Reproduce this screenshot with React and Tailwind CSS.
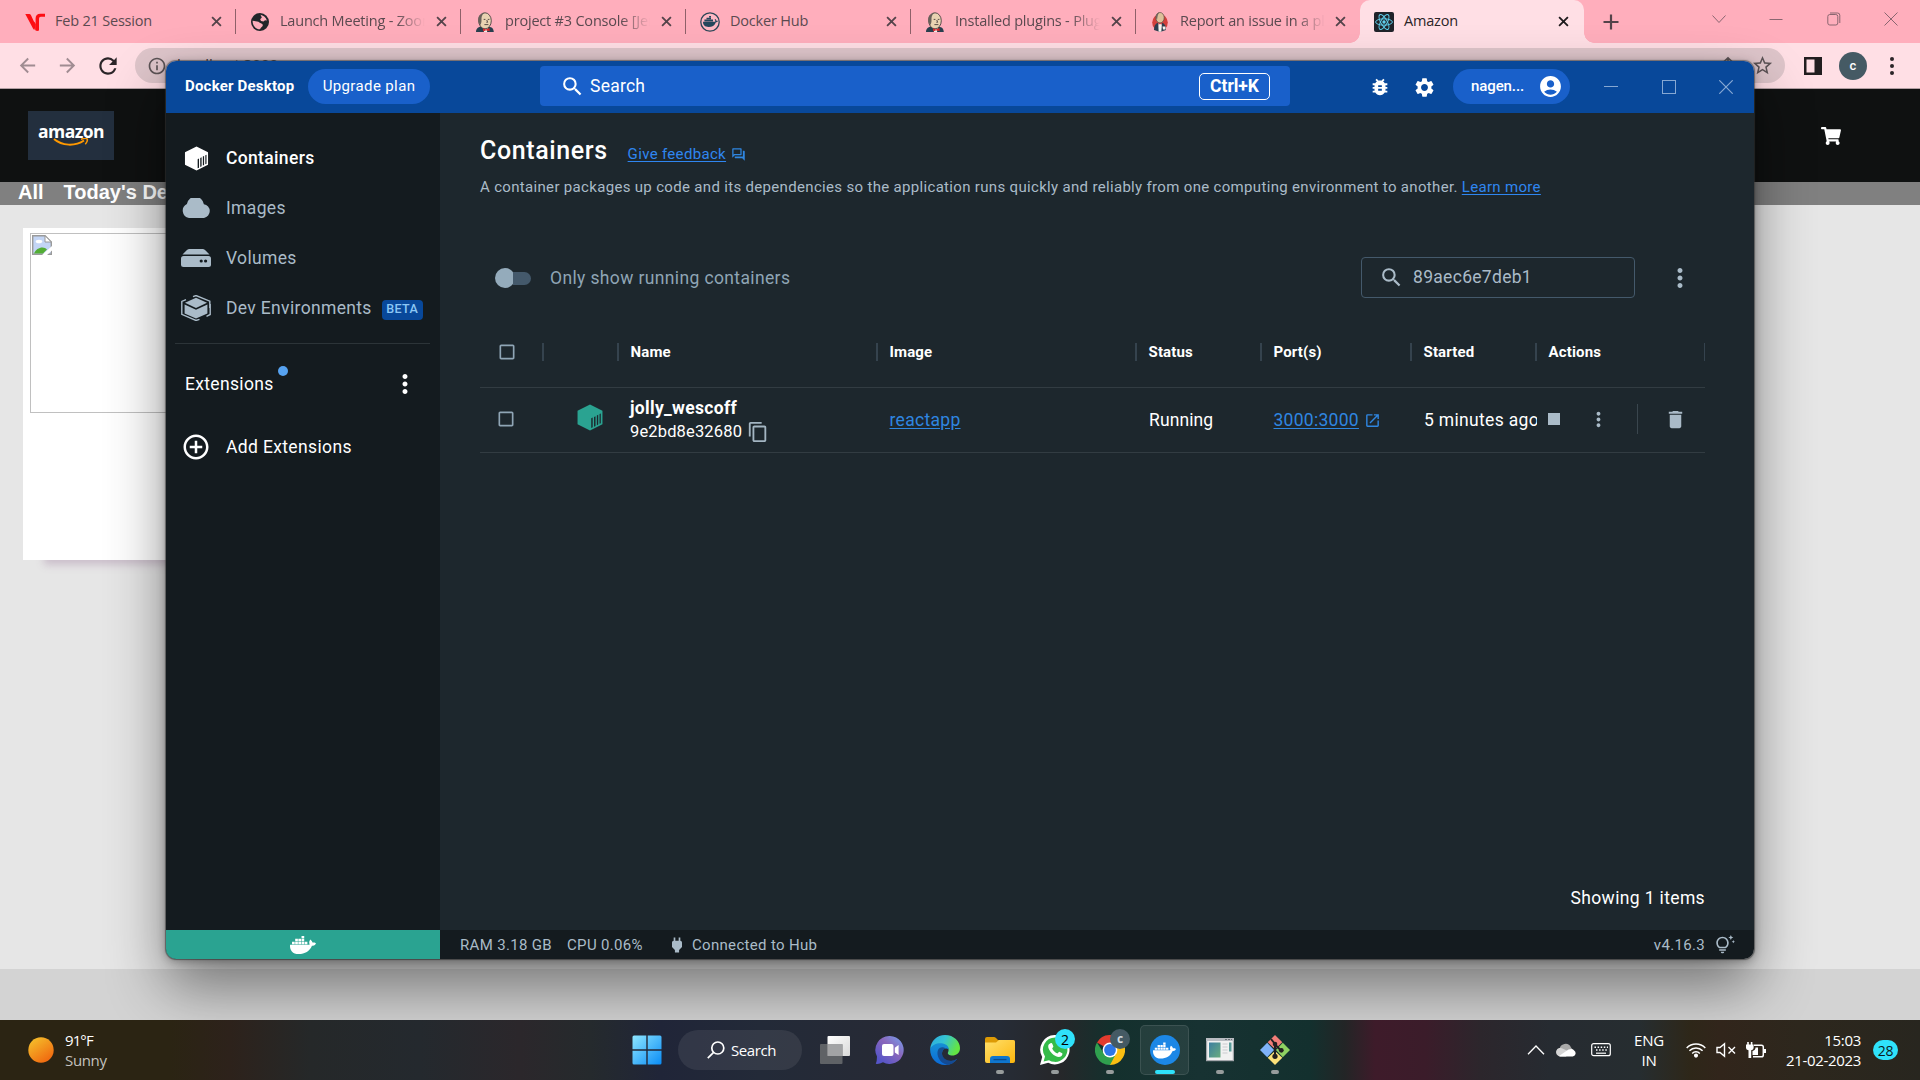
import React from "react";
import {
  MdSearch, MdBugReport, MdSettings, MdAccountCircle, MdMoreVert, MdContentCopy, MdOpenInNew, MdDelete,
  MdCheckBoxOutlineBlank, MdOutlineQuestionAnswer, MdAddCircleOutline, MdPower, MdOutlineTipsAndUpdates,
  MdStarBorder, MdInfoOutline, MdArrowBack, MdArrowForward, MdRefresh,
} from "react-icons/md";
import { FaDocker, FaShoppingCart } from "react-icons/fa";

const SEGOE = "font-['Open_Sans','Noto_Sans',sans-serif]";

/* ---------- Favicons ---------- */

function VIcon() {
  return (
    <svg viewBox="0 0 20 20" className="h-5 w-5">
      <path d="M.3 2 H4.2 Q5.4 2 6 3.2 L9.6 11 V17.8 Q8.6 17.6 8 16.4 Z" fill="#fd0d12" />
      <path d="M10.6 18.6 V6.6 Q10.6 1.8 15.4 1.8 H20 V4.8 H15.8 Q14 4.8 14 6.8 V18.6 Q12.2 19.2 10.6 18.6 Z" fill="#fd0d12" />
      <path d="M8.4 15 L10.8 18.6 L10.8 12 L9 9.6 Z" fill="#fd0d12" />
    </svg>
  );
}

function GlobeIcon() {
  return (
    <svg viewBox="0 0 20 20" className="h-5 w-5">
      <circle cx="10" cy="10" r="9" fill="#22262a" />
      <path d="M10.5 2.8 C13 3.3 16 5.2 16.9 8.5 L15 8.2 L13.5 9.6 L11 9 L10.2 7.2 L11.8 5.6 Z" fill="#ffaebc" />
      <path d="M2.6 8.8 C5 9.4 8.2 9 9.4 10.6 C10.2 11.6 12.6 11.3 12.8 13 C13 14.8 10.8 15 10 17.3 C6 17.3 2.4 13.6 2.6 8.8 Z" fill="#ffaebc" />
    </svg>
  );
}

function JenkinsIcon() {
  return (
    <svg viewBox="0 0 20 20" className="h-5 w-5">
      <path d="M1 20 C1 16 4 14.5 7 14.5 L15 15 C17.5 15.6 18.5 17 18.8 20 Z" fill="#29404f" />
      <path d="M8 15 L13 15 L12 20 L9 20 Z" fill="#f3efe8" />
      <ellipse cx="10" cy="8.8" rx="6.3" ry="8" fill="#e9d3b2" stroke="#4a4140" strokeWidth=".9" />
      <path d="M3.8 11 C2 5 4.6 1.2 9.6 .7 C6.8 2.8 6.3 5 6.5 8 C6.6 10 6 12.6 5.2 13 Z" fill="#69605a" />
      <path d="M8.7 7.4 H10.4 M12.8 7.4 H14.4 M11.8 8 L12.6 10.3 H11.4 M9.4 12.6 H13.4" stroke="#49403c" strokeWidth=".9" fill="none" />
      <path d="M8 16.3 L11 17.6 L14.4 16.1 L14.7 19.3 L11 18.3 L8.2 19.6 Z" fill="#d8252b" />
    </svg>
  );
}

function ButlerIcon() {
  return (
    <svg viewBox="0 0 20 20" className="h-5 w-5">
      <ellipse cx="10" cy="10.5" rx="7.8" ry="8.3" fill="#d4403c" />
      <path d="M4 18 C4 13 6 10.5 10 10.5 C14 10.5 16 13 16 18 L10 20 Z" fill="#2e3f50" />
      <path d="M8.3 11 H12 L11.3 19.8 H8.6 Z" fill="#f6f3ef" />
      <ellipse cx="10" cy="5.7" rx="4.2" ry="5.2" fill="#ddc09a" stroke="#5a4a44" strokeWidth=".7" />
      <path d="M6 6 C5.4 2.5 7.5 .7 9.4 .6 C7.6 2.2 7.5 5 7 8 Z" fill="#71655d" />
      <path d="M12.5 14.5 H15.5 V17.5 H13 Z" fill="#f6f3ef" />
      <path d="M8.4 10.6 L10 11.5 L11.8 10.6 V12.6 L10 11.9 L8.5 12.6 Z" fill="#c51d25" />
    </svg>
  );
}

function DockerHubIcon() {
  return (
    <svg viewBox="0 0 20 20" className="h-5 w-5">
      <circle cx="10" cy="10" r="9.2" fill="#ffb8c4" stroke="#2d4657" strokeWidth="1.3" />
      <path d="M3 9.8 H15.2 C15.4 8.9 15.2 8 14.6 7.6 L15.3 7 C16 7.4 16.3 8 16.4 8.7 C17 8.6 17.6 8.7 18 9 C17.6 9.9 16.8 10.2 15.9 10.2 C14.6 13.5 12.2 15 8.6 15 C4.8 15 3 13 3 9.8 Z" fill="#24475c" />
      <path d="M4.4 7.6 H13 V9.4 H4.4 Z M6.5 5.7 H11 V7.3 H6.5 Z M9.1 4 H11 V5.4 H9.1 Z" fill="#24475c" />
    </svg>
  );
}

function ReactIcon() {
  return (
    <svg viewBox="0 0 20 20" className="h-5 w-5">
      <rect width="20" height="20" rx="2" fill="#20232a" />
      <g fill="none" stroke="#5fcfec" strokeWidth=".95">
        <ellipse cx="10" cy="10" rx="8.4" ry="3.2" />
        <ellipse cx="10" cy="10" rx="8.4" ry="3.2" transform="rotate(60 10 10)" />
        <ellipse cx="10" cy="10" rx="8.4" ry="3.2" transform="rotate(120 10 10)" />
      </g>
      <circle cx="10" cy="10" r="1.7" fill="#5fcfec" />
    </svg>
  );
}

function CloseX({ className }) {
  return (
    <svg viewBox="0 0 12 12" className={className}>
      <path d="M1.2 1.2 L10.8 10.8 M10.8 1.2 L1.2 10.8" stroke="currentColor" strokeWidth="2" fill="none" />
    </svg>
  );
}

/* ---------- Browser ---------- */

const tabs = [
  { icon: VIcon, title: "Feb 21 Session" },
  { icon: GlobeIcon, title: "Launch Meeting - Zoom", fade: true },
  { icon: JenkinsIcon, title: "project #3 Console [Jenkins]", fade: true },
  { icon: DockerHubIcon, title: "Docker Hub" },
  { icon: JenkinsIcon, title: "Installed plugins - Plugin", fade: true },
  { icon: ButlerIcon, title: "Report an issue in a plugin", fade: true, last: true },
];

function Tab({ icon: Icon, title, fade, last }) {
  return (
    <div className="flex h-[43px] w-[225px] shrink-0 items-center pl-[14px]">
      <Icon />
      <span
        className={
          "-mt-[2px] ml-[10px] w-[146px] overflow-hidden whitespace-nowrap text-[14.5px] tracking-[-0.2px] text-[#5b4a50] " +
          (fade ? "[mask-image:linear-gradient(to_right,black_116px,transparent_145px)]" : "")
        }
      >
        {title}
      </span>
      <CloseX className={"h-[11px] w-[11px] text-[#54434a] " + (last ? "ml-[9px]" : "ml-[10px]")} />
      {!last && <div className="ml-[13px] h-[25px] w-px bg-[#8f6069]" />}
    </div>
  );
}

function TabStrip() {
  return (
    <div className="flex h-[43px] items-center bg-[#ffaebc] pl-[11px]">
      {tabs.map((t) => (
        <Tab key={t.title} {...t} />
      ))}
      <div className="relative -ml-px flex h-[43px] w-[224px] shrink-0 items-center rounded-t-[10px] bg-[#ffdfe5] pl-[14px]">
        <div className="absolute -left-[10px] bottom-0 h-[10px] w-[10px] bg-[radial-gradient(circle_at_0_0,#ffaebc_9.5px,#ffdfe5_10px)]" />
        <div className="absolute -right-[10px] bottom-0 h-[10px] w-[10px] bg-[radial-gradient(circle_at_100%_0,#ffaebc_9.5px,#ffdfe5_10px)]" />
        <ReactIcon />
        <span className="-mt-[2px] ml-[10px] w-[154px] text-[14.5px] tracking-[-0.2px] text-[#2b2528]">Amazon</span>
        <CloseX className="h-[11px] w-[11px] text-[#1f1b1d]" />
      </div>
      <svg viewBox="0 0 16 16" className="ml-[19px] h-4 w-4 shrink-0 text-[#54434a]">
        <path d="M8 .5 V15.5 M.5 8 H15.5" stroke="currentColor" strokeWidth="2.2" />
      </svg>
      <div className="mb-[5px] ml-auto mr-[22px] flex w-[186px] justify-between">
        <svg viewBox="0 0 14 14" className="h-[14px] w-[14px]" fill="none" stroke="#8a6670">
          <path d="M.5 3.5 L7 10.5 L13.5 3.5" />
        </svg>
        <svg viewBox="0 0 14 14" className="h-[14px] w-[14px]" fill="none" stroke="#8a6670">
          <path d="M.5 7.5 H13.5" />
        </svg>
        <svg viewBox="0 0 14 14" className="h-[14px] w-[14px]" fill="none" stroke="#8a6670">
          <rect x=".8" y="2.5" width="10" height="10.5" rx="2" />
          <path d="M3 1 H10.5 Q12.8 1 12.8 3.2 V11" />
        </svg>
        <svg viewBox="0 0 14 14" className="h-[14px] w-[14px]" fill="none" stroke="#8a6670">
          <path d="M.5 .5 L13.5 13.5 M13.5 .5 L.5 13.5" />
        </svg>
      </div>
    </div>
  );
}

function Toolbar() {
  return (
    <div className="flex h-[46px] items-center border-b border-[#b3a0a4] bg-[#ffdfe5] pl-[16px]">
      <MdArrowBack className="h-[23px] w-[23px] text-[#a08c92]" />
      <MdArrowForward className="ml-[17px] h-[23px] w-[23px] text-[#a08c92]" />
      <MdRefresh className="ml-[16px] h-[26px] w-[26px] text-[#2b2528]" />
      <div className="ml-[14px] flex h-[35px] w-[1650px] items-center rounded-full bg-[#dec5ca] pl-[12px]">
        <MdInfoOutline className="h-5 w-5 text-[#5c5356]" />
        <span className="-mt-[3px] ml-[10px] text-[15px] text-[#3a3436]">localhost:3000</span>
        <svg viewBox="0 0 20 20" className="ml-auto h-5 w-5" fill="none" stroke="#5c5356" strokeWidth="1.7">
          <path d="M10 2 V13 M5.5 6 L10 1.8 L14.5 6 M4 9 V18 H16 V9" />
        </svg>
        <MdStarBorder className="ml-[13px] mr-[11px] h-[23px] w-[23px] text-[#5c5356]" />
      </div>
      <svg viewBox="0 0 18 18" className="ml-[19px] h-[18px] w-[18px]">
        <path d="M0 0 H18 V18 H0 Z M2.5 2.5 V15.5 H10.5 V2.5 Z" fill="#221e20" fillRule="evenodd" />
      </svg>
      <div className="ml-[17px] flex h-7 w-7 items-center justify-center rounded-full bg-[#455a64] font-[Roboto,sans-serif] text-[13px] font-medium text-white">
        c
      </div>
      <svg viewBox="0 0 4 18" className="ml-[23px] h-[18px] w-1" fill="#2b2528">
        <circle cx="2" cy="2" r="2" /><circle cx="2" cy="9" r="2" /><circle cx="2" cy="16" r="2" />
      </svg>
    </div>
  );
}

function BrokenImage() {
  return (
    <svg viewBox="0 0 20 20" className="h-5 w-5">
      <path d="M.7 .7 H13 L19.3 7 V19.3 H.7 Z" fill="#c3d5f5" stroke="#9a9a9a" strokeWidth="1.4" />
      <path d="M13 .7 V7 H19.3 Z" fill="#fff" stroke="#9a9a9a" />
      <ellipse cx="7" cy="6.5" rx="3.3" ry="1.8" fill="#fff" />
      <path d="M2 18.6 C4 12.5 12 10.5 15 14.5 L11 18.6 Z" fill="#53ad35" />
      <path d="M20.5 10.5 L9.5 20.5 H14.5 L20.5 15 Z" fill="#fff" />
    </svg>
  );
}

function AmazonPage() {
  return (
    <div className="flex h-[931px] flex-col bg-[#e6e6e6]">
      <div className="flex h-[93px] shrink-0 items-center justify-between bg-[#0f1111] pl-7 pr-[79px]">
        <div className="flex h-[49px] w-[86px] flex-col items-center bg-[#232f3e]">
          <span className="mt-[9px] font-['Open_Sans',sans-serif] text-[17.5px] font-bold leading-[22px] tracking-[-0.5px] text-white">amazon</span>
          <svg viewBox="0 0 36 9" className="-mt-[4px] h-[9px] w-9">
            <path d="M1 1 C9 8 22 8.5 31 2.5" fill="none" stroke="#ff9900" strokeWidth="2" />
            <path d="M28 1.2 C31 .3 34 .3 34.3 1.2 C34.6 2.5 33.5 5 32.3 6.3" fill="none" stroke="#ff9900" strokeWidth="1.5" />
          </svg>
        </div>
        <FaShoppingCart className="mt-px h-[18px] w-[20px] text-white" />
      </div>
      <div className="flex h-[23px] shrink-0 items-center gap-5 bg-[#808080] pb-[2px] pl-[18px] font-['Liberation_Sans',Arial,sans-serif] text-[20px] font-bold leading-[21px] text-white">
        <span>All</span>
        <span>Today's Deals</span>
      </div>
      <div className="ml-[23px] mt-[23px] h-[332px] w-[300px] shrink-0 bg-white pl-[7px] pt-[5px] shadow-[18px_8px_8px_-3px_#cbbfcb]">
        <div className="h-[180px] w-[280px] border border-[#c0c0c0] p-px">
          <BrokenImage />
        </div>
      </div>
      <div className="mt-auto h-[51px] shrink-0 bg-[#d3d3d3]" />
    </div>
  );
}

/* ---------- Docker Desktop ---------- */

function ContainerCube({ className, bars }) {
  return (
    <svg viewBox="0 0 24 26" className={className}>
      <path d="M12 .5 L24 6.5 V19.5 L12 25.5 L0 19.5 V6.5 Z" fill="currentColor" />
      <path d="M13.2 13.8 L14.6 13.1 V22.5 L13.2 23.2 Z M15.9 12.4 L17.3 11.7 V21.1 L15.9 21.8 Z M18.6 11 L19.9 10.4 V19.8 L18.6 20.4 Z M21.2 9.7 L22.4 9.1 V18.5 L21.2 19.1 Z" fill={bars} />
    </svg>
  );
}

function CloudIcon() {
  return (
    <svg viewBox="0 0 30 20" className="h-5 w-[30px]">
      <path d="M8 20 A7.5 7.5 0 0 1 5.9 5.9 A8.6 8.6 0 0 1 22.9 6.2 A7 7 0 0 1 23 20 Z" fill="#aabbc8" />
    </svg>
  );
}

function VolumeIcon() {
  return (
    <svg viewBox="0 0 30 18" className="h-[18px] w-[30px]">
      <path d="M8.5 0 H21.5 Q23 0 24.3 1.3 L28.5 5.5 H1.5 L5.7 1.3 Q7 0 8.5 0 Z" fill="#aabbc8" />
      <path d="M0 9.5 Q0 7 2.5 7 H27.5 Q30 7 30 9.5 V15.5 Q30 18 27.5 18 H2.5 Q0 18 0 15.5 Z" fill="#aabbc8" />
      <circle cx="20.2" cy="12" r="1.6" fill="#141b1f" />
      <circle cx="24.6" cy="12" r="1.6" fill="#141b1f" />
    </svg>
  );
}

function DevEnvIcon() {
  return (
    <svg viewBox="0 0 30 26" className="h-[26px] w-[30px]">
      <path d="M15 2.8 L26 7.8 L15 13 L4 7.8 Z" fill="#aabbc8" />
      <path d="M3.6 9.6 L15 14.8 L26.4 9.6 V18.6 L15 23.4 L3.6 18.6 Z" fill="#aabbc8" />
      <path d="M12 1.7 L15 .5 L28.8 6.2 V13 M29.2 9 V19.5 L25.5 21.3 M18.5 24.3 L15 25.5 L.8 19.4 V13.5 M.8 16 V6.4 L5 4.6" fill="none" stroke="#aabbc8" strokeWidth="1.4" />
    </svg>
  );
}

function NavItem({ icon, label, active, badge }) {
  return (
    <div className="flex h-[50px] items-center pl-[15px]">
      <div className="flex w-[30px] justify-center">{icon}</div>
      <span className={"ml-[15px] whitespace-nowrap text-[17.5px] tracking-[0.34px] " + (active ? "font-medium text-white" : "text-[#aabbc8]")}>{label}</span>
      {badge && (
        <span className="ml-[10px] mt-[3px] flex h-5 w-[41px] items-center justify-center rounded bg-[#08489a] text-[12.5px] font-medium tracking-[0.4px] text-[#8bc7f5]">
          {badge}
        </span>
      )}
    </div>
  );
}

function TitleBar() {
  return (
    <div className="flex h-[52px] shrink-0 items-center bg-[#08489a] pb-[2px] pl-[19px]">
      <span className="w-[123px] whitespace-nowrap text-[15px] font-bold tracking-[0.2px] text-white">Docker Desktop</span>
      <div className="mt-px flex h-[35px] w-[122px] items-center justify-center rounded-full bg-[#1960ca] pb-px text-[15px] tracking-[0.38px] text-white">
        Upgrade plan
      </div>
      <div className="ml-[110px] flex h-10 w-[750px] items-center rounded bg-[#1960ca] pl-[20px] pr-5">
        <MdSearch className="h-[25px] w-[25px] text-white" />
        <span className="ml-[5px] text-[17.5px] tracking-[0.25px] text-white">Search</span>
        <div className="ml-auto flex h-[27px] w-[71px] items-center justify-center rounded-[5px] border border-white text-[17.5px] font-bold tracking-[-0.05px] text-white">
          Ctrl+K
        </div>
      </div>
      <MdBugReport className="ml-[79px] mt-[2px] h-[22px] w-[22px] text-white" />
      <MdSettings className="ml-[22px] mt-[2px] h-[23px] w-[23px] text-white" />
      <div className="ml-[17px] mt-px flex h-[35px] w-[117px] items-center justify-between rounded-full bg-[#1960ca] pl-[18px] pr-[7px] text-[15px] font-medium text-white">
        <span className="tracking-[-0.1px]">nagen...</span>
        <MdAccountCircle className="h-[25px] w-[25px]" />
      </div>
      <svg viewBox="0 0 14 14" className="ml-[34px] mt-px h-[14px] w-[14px]" fill="none" stroke="#86a8d3">
        <path d="M0 6.5 H14" />
      </svg>
      <svg viewBox="0 0 14 14" className="ml-[44px] mt-px h-[14px] w-[14px]" fill="none" stroke="#86a8d3">
        <rect x=".5" y=".5" width="13" height="13" />
      </svg>
      <svg viewBox="0 0 14 14" className="ml-[43px] mt-px h-[14px] w-[14px]" fill="none" stroke="#86a8d3" strokeWidth="1.2">
        <path d="M.3 .3 L13.7 13.7 M13.7 .3 L.3 13.7" />
      </svg>
    </div>
  );
}

function Sidebar() {
  return (
    <div className="flex w-[274px] shrink-0 flex-col bg-[#141b1f]">
      <div className="pt-[20px]">
        <NavItem active icon={<ContainerCube className="h-[25px] w-[27px] text-white" bars="#141b1f" />} label="Containers" />
        <NavItem icon={<CloudIcon />} label="Images" />
        <NavItem icon={<VolumeIcon />} label="Volumes" />
        <NavItem icon={<DevEnvIcon />} label="Dev Environments" badge="BETA" />
      </div>
      <div className="ml-[9px] mt-[10px] h-px w-[255px] bg-[#2c3438]" />
      <div className="mt-[20px] flex h-10 items-center pl-[19px]">
        <div className="relative text-[17.5px] tracking-[0.34px] text-white">
          Extensions
          <span className="absolute -right-[14px] -top-[5px] h-[10px] w-[10px] rounded-full bg-[#56a2f0]" />
        </div>
        <MdMoreVert className="ml-auto mr-[20px] h-[30px] w-[30px] text-white" />
      </div>
      <div className="mt-[18px] flex h-[50px] items-center pl-[15px] text-[17.5px] tracking-[0.36px] text-white">
        <MdAddCircleOutline className="h-[30px] w-[30px]" />
        <span className="ml-[15px]">Add Extensions</span>
      </div>
    </div>
  );
}

const GRID = "grid grid-cols-[64px_75px_259px_259px_125px_150px_125px_168px]";

function HeadCell({ children, thin }) {
  return (
    <div className="flex items-center justify-between pl-[11.5px]">
      <span>{children}</span>
      <div className={"h-[18px] bg-[#35434e] " + (thin ? "w-px" : "w-[2px]")} />
    </div>
  );
}

function ContainersTable() {
  return (
    <div className="w-[1225px]">
      <div className={GRID + " h-[73px] border-b border-[#323c42] pt-[2px] text-[15px] font-bold tracking-[0.15px] text-white"}>
        <HeadCell><MdCheckBoxOutlineBlank className="ml-[5px] h-[20px] w-[20px] text-[#8fa5b5]" /></HeadCell>
        <HeadCell />
        <HeadCell>Name</HeadCell>
        <HeadCell>Image</HeadCell>
        <HeadCell>Status</HeadCell>
        <HeadCell>Port(s)</HeadCell>
        <HeadCell>Started</HeadCell>
        <HeadCell thin>Actions</HeadCell>
      </div>
      <div className={GRID + " h-[65px] items-center border-b border-[#323c42] text-[17.5px] text-white"}>
        <MdCheckBoxOutlineBlank className="-mt-[2px] ml-4 h-[20px] w-[20px] text-[#8fa5b5]" />
        <ContainerCube className="-mt-[6px] ml-[31px] h-[27px] w-[30px] text-[#2aa391]" bars="#1d272d" />
        <div className="pl-[11px] leading-[23px]">
          <div className="font-bold tracking-[0.3px]">jolly_wescoff</div>
          <div className="flex items-center text-[16.5px] tracking-[0.15px]">
            9e2bd8e32680
            <MdContentCopy className="ml-[5px] h-[22px] w-[22px] text-[#a3b5c2]" />
          </div>
        </div>
        <span className="pl-[11.5px] tracking-[0.3px] text-[#2f86e0] underline underline-offset-2">reactapp</span>
        <span className="pl-[12px] tracking-[0.1px]">Running</span>
        <div className="flex items-center pl-[11.5px] tracking-[0.28px] text-[#2f86e0]">
          <span className="underline underline-offset-2">3000:3000</span>
          <MdOpenInNew className="ml-[5px] h-[17px] w-[17px]" />
        </div>
        <div className="overflow-hidden whitespace-nowrap pl-[12px] tracking-[0.32px]">5 minutes ago</div>
        <div className="-mt-[2px] flex items-center pl-[11px] text-[#aabbc8]">
          <div className="h-[12px] w-[12px] bg-[#aabbc8]" />
          <MdMoreVert className="ml-[27px] h-[23px] w-[23px]" />
          <div className="ml-[27px] h-[30px] w-px bg-[#3a464e]" />
          <MdDelete className="ml-[26px] h-[23px] w-[23px]" />
        </div>
      </div>
    </div>
  );
}

function MainPane() {
  return (
    <div className="flex flex-1 flex-col bg-[#1d272d] pl-[40px]">
      <div className="mt-[21px] flex h-[34px] items-center">
        <span className="text-[25px] font-medium tracking-[0.6px] text-white">Containers</span>
        <span className="ml-5 mt-[6px] whitespace-nowrap text-[15px] tracking-[0.33px] text-[#2f86f0] underline underline-offset-2">Give feedback</span>
        <MdOutlineQuestionAnswer className="ml-[5px] mt-[6px] h-[15px] w-[15px] text-[#2f86e0]" />
      </div>
      <div className="mt-[8px] h-[22px] whitespace-nowrap text-[15px] leading-[22px] tracking-[0.323px] text-[#aabbc8]">
        A container packages up code and its dependencies so the application runs quickly and reliably from one computing environment to another.{" "}
        <span className="text-[#2f86f0] underline underline-offset-2">Learn more</span>
      </div>
      <div className="mt-[59px] flex h-[42px] items-center">
        <div className="ml-[15px] flex h-5 w-9 items-center">
          <div className="h-5 w-5 shrink-0 rounded-full bg-[#94abbb]" />
          <div className="-ml-[2px] h-[13px] w-[18px] rounded-r-full bg-[#44596b]" />
        </div>
        <span className="ml-[19px] text-[17.5px] tracking-[0.37px] text-[#8fa5b5]">Only show running containers</span>
        <div className="-mt-px ml-auto flex h-[41px] w-[274px] items-center rounded border border-[#44596b] pl-[17px] text-[17.5px] text-[#aabbc8]">
          <MdSearch className="h-[25px] w-[25px]" />
          <span className="ml-[9px] tracking-[0.3px]">89aec6e7deb1</span>
        </div>
        <MdMoreVert className="ml-[30px] mr-[59px] h-[30px] w-[30px] text-[#aabbc8]" />
      </div>
      <div className="mt-[16px]">
        <ContainersTable />
      </div>
      <div className="mb-[20px] mr-[49px] mt-auto self-end text-[17.5px] leading-6 tracking-[0.36px] text-white">Showing 1 items</div>
    </div>
  );
}

function StatusBar() {
  return (
    <div className="flex h-[29px] shrink-0 items-center bg-[#141b1f] text-[15px] tracking-[0.33px] text-[#aabbc8]">
      <div className="flex h-full w-[274px] items-center justify-center bg-[#2aa391]">
        <FaDocker className="h-[26px] w-[26px] text-white" />
      </div>
      <span className="ml-5 mt-px">RAM 3.18 GB</span>
      <span className="ml-[15px] mt-px">CPU 0.06%</span>
      <MdPower className="ml-[24px] h-[20px] w-[20px]" />
      <span className="ml-[5px] mt-px">Connected to Hub</span>
      <span className="ml-auto mt-px">v4.16.3</span>
      <MdOutlineTipsAndUpdates className="ml-[10px] mr-[19px] h-[20px] w-[20px]" />
    </div>
  );
}

function DockerWindow() {
  return (
    <div className="absolute left-[166px] top-[61px] flex h-[898px] w-[1588px] flex-col overflow-hidden rounded-[10px] font-[Roboto,sans-serif] shadow-[0_28px_58px_rgba(0,0,0,0.45),0_2px_10px_rgba(0,0,0,0.3),0_0_1px_1px_rgba(80,80,80,0.6)]">
      <TitleBar />
      <div className="flex flex-1">
        <Sidebar />
        <MainPane />
      </div>
      <StatusBar />
    </div>
  );
}

/* ---------- Taskbar ---------- */

function WindowsLogo() {
  return (
    <svg viewBox="0 0 30 30" className="h-[30px] w-[30px]">
      <defs>
        <linearGradient id="win" x1="0" y1="0" x2="1" y2="1">
          <stop offset="0" stopColor="#8ee6ff" /><stop offset="1" stopColor="#0a8cf5" />
        </linearGradient>
      </defs>
      <path d="M2 .5 H14.3 V14.3 H.5 V2 Q.5 .5 2 .5 Z M15.7 .5 H28 Q29.5 .5 29.5 2 V14.3 H15.7 Z M.5 15.7 H14.3 V29.5 H2 Q.5 29.5 .5 28 Z M15.7 15.7 H29.5 V28 Q29.5 29.5 28 29.5 H15.7 Z" fill="url(#win)" />
    </svg>
  );
}

function TaskViewIcon() {
  return (
    <svg viewBox="0 0 30 30" className="h-[30px] w-[30px]">
      <defs>
        <linearGradient id="tv" x1="0" y1="0" x2="1" y2="1"><stop offset="0" stopColor="#fff" /><stop offset="1" stopColor="#d9d9d9" /></linearGradient>
      </defs>
      <rect x="7.5" y="1" width="22.5" height="20" rx="1" fill="url(#tv)" />
      <rect x="0" y="9" width="22.5" height="20" rx="1" fill="#6a6c6e" fillOpacity=".85" />
      <path d="M7.5 9 H22.5 V21 H7.5 Z" fill="#a2a3a5" />
    </svg>
  );
}

function ChatIcon() {
  return (
    <svg viewBox="0 0 30 30" className="h-[30px] w-[30px]">
      <defs>
        <linearGradient id="chat" x1="1" y1="0" x2=".2" y2=".9"><stop offset="0" stopColor="#74a4f2" /><stop offset=".5" stopColor="#8a66bb" /><stop offset="1" stopColor="#5655c8" /></linearGradient>
      </defs>
      <path d="M15 1 A14 14 0 1 1 8 27.3 Q4 29.3 .8 28.8 Q2 26 2 21.5 A14 14 0 0 1 15 1 Z" fill="url(#chat)" />
      <rect x="7" y="9" width="11.5" height="12" rx="2" fill="#fff" />
      <path d="M19.8 12.8 L23.6 10 V20 L19.8 17.4 Z" fill="#fff" />
    </svg>
  );
}

function EdgeIcon() {
  return (
    <svg viewBox="0 0 30 30" className="h-[30px] w-[30px]">
      <defs>
        <linearGradient id="e1" x1="0" y1="0" x2="1" y2=".35"><stop offset="0" stopColor="#2aa9e0" /><stop offset=".5" stopColor="#35c3d3" /><stop offset="1" stopColor="#63e544" /></linearGradient>
        <linearGradient id="e2" x1="0" y1="0" x2="0" y2="1"><stop offset="0" stopColor="#1690d4" /><stop offset="1" stopColor="#0b6ad6" /></linearGradient>
      </defs>
      <path d="M15 0 C24 0 30 6.5 30 13 C30 18.5 26 20.5 22.5 20.5 C19 20.5 17.2 19 18 17.5 C20 14 17 9.5 11.5 9.3 C6.5 9.2 2.5 11.5 .2 14 C.8 6 7 0 15 0 Z" fill="url(#e1)" />
      <path d="M.1 14 C2 9.6 7 7.8 11.5 8.2 C16 8.6 19 11.2 18.6 14.5 C16.5 12.5 12.5 13.5 12 18 C11.6 22.5 16 27 22.5 25.8 C24.5 25.4 26 24.6 27.3 23.8 C24.5 28 20 30.2 15 30 C6.5 30 0 23 .1 14 Z" fill="url(#e2)" />
      <path d="M8 15 C6 20 9.5 28 17 29.8 C21.5 29.5 25.2 27.2 27.3 23.8 C21 28 12.5 25 12 18 C12.2 15.5 14 13.6 15.7 13.4 C13 11.5 9.5 12 8 15 Z" fill="#173f7c" fillOpacity=".75" />
    </svg>
  );
}

function ExplorerIcon() {
  return (
    <svg viewBox="0 0 30 30" className="h-[30px] w-[30px]">
      <defs>
        <linearGradient id="fold" x1="0" y1="0" x2="1" y2="1"><stop offset="0" stopColor="#ffe06c" /><stop offset="1" stopColor="#fcb60d" /></linearGradient>
      </defs>
      <path d="M0 4 Q0 2 2 2 H9 Q10 2 11 3 L13 5 H28 Q30 5 30 7 V12 H0 Z" fill="#dd9a05" />
      <path d="M0 7.5 H11 L14 5 H28 Q30 5 30 7 V26 Q30 28 28 28 H2 Q0 28 0 26 Z" fill="url(#fold)" />
      <path d="M5 28 V24 Q5 21 8 21 H22 Q25 21 25 24 V28 Z" fill="#0f76ce" />
      <path d="M8.5 24.6 H21.5" stroke="#0a4b8c" strokeWidth="1.3" />
    </svg>
  );
}

function WhatsAppIcon() {
  return (
    <svg viewBox="0 0 30 30" className="h-[30px] w-[30px]">
      <path d="M15.3 0 A14.7 14.7 0 1 1 8.2 27.8 L0 30 L2.2 22 A14.7 14.7 0 0 1 15.3 0 Z" fill="#fff" />
      <path d="M15.3 2.5 A12.2 12.2 0 1 1 9 25.2 L3.6 26.5 L5 21.4 A12.2 12.2 0 0 1 15.3 2.5 Z" fill="#34bb48" />
      <path d="M10.5 8.2 C11.5 7.8 12 8 12.4 9 L13.3 11.2 C13.6 12 12.3 13 12.2 13.5 C13.3 16 15.2 17.6 17.5 18.4 C18 18.3 18.8 16.8 19.4 16.8 L22.2 18.2 C22.8 18.6 22.3 20.8 20.8 21.5 C18.5 22.6 14.8 21.2 12 18.4 C9.5 16 8 13 8.2 11 C8.4 9.7 9.3 8.6 10.5 8.2 Z" fill="#fff" />
    </svg>
  );
}

function ChromeIcon() {
  return (
    <svg viewBox="0 0 30 30" className="h-[30px] w-[30px]">
      <path d="M15 15 L2 7.5 A15 15 0 0 1 28 7.5 Z" fill="#e23b2e" />
      <path d="M15 15 L28 7.5 A15 15 0 0 1 15 30 Z" fill="#fbbf12" />
      <path d="M15 15 L21 18.8 L15 30 A15 15 0 0 1 2 7.5 L9 18.8 Z" fill="#2fa04e" />
      <circle cx="15" cy="15" r="7.4" fill="#fff" />
      <circle cx="15" cy="15" r="5.9" fill="#2d76e8" />
    </svg>
  );
}

function DockerTaskIcon() {
  return (
    <div className="flex h-[30px] w-[30px] items-center justify-center rounded-full bg-[#1c87e6]">
      <FaDocker className="h-[23px] w-[23px] text-white" />
    </div>
  );
}

function AppWindowIcon() {
  return (
    <svg viewBox="0 0 30 30" className="h-[30px] w-[30px]">
      <defs>
        <linearGradient id="app" x1="0" y1="0" x2="1" y2="1"><stop offset="0" stopColor="#3d7fa0" /><stop offset="1" stopColor="#69ab7e" /></linearGradient>
      </defs>
      <rect x="1.6" y="3.6" width="26.8" height="22" fill="#f1f1f1" stroke="#a5a8ad" strokeWidth="1.2" />
      <path d="M1 3 H29 V6 H1 Z" fill="#b9bcc2" />
      <path d="M20 4.5 H27" stroke="#6d7278" strokeDasharray="2 1" />
      <rect x="4" y="7.5" width="11.5" height="15" fill="url(#app)" />
      <path d="M17.5 9 H22.5 M17.5 12 H22.5 M17.5 15 H22.5 M17.5 18 H22.5" stroke="#c9cbd0" strokeWidth="1.2" />
      <rect x="24" y="7.5" width="2.5" height="9" fill="#5a9c9a" />
    </svg>
  );
}

function GitIcon() {
  return (
    <svg viewBox="0 0 30 30" className="h-[30px] w-[30px]">
      <path d="M15 0 L22.3 7.3 L15 14 L7.7 7.3 Z" fill="#f27d78" />
      <path d="M7.2 7.8 L14 15 L7.2 22.2 L0 15 Z" fill="#7fb2f8" />
      <path d="M22.8 7.8 L30 15 L22.8 22.2 L16 15 Z" fill="#8fd162" />
      <path d="M15 16 L22.3 22.7 L15 30 L7.7 22.7 Z" fill="#fce079" />
      <path d="M11 4 L15 9 V21 M15 9.5 L21 15.5" fill="none" stroke="#231f20" strokeWidth="2" />
      <circle cx="15" cy="9" r="2.3" fill="#231f20" /><circle cx="15" cy="21.3" r="2.6" fill="#231f20" /><circle cx="21.3" cy="15.3" r="2.4" fill="#231f20" />
    </svg>
  );
}

function TaskApp({ children, running, active, badge }) {
  return (
    <div className={"relative mx-[3px] flex h-[50px] w-[49px] items-center justify-center rounded-[5px] " + (active ? "border border-white/10 bg-white/[0.07]" : "")}>
      {children}
      {badge}
      {running && <div className="absolute bottom-[1px] h-1 w-2 rounded-full bg-[#979c9c]" />}
      {active && <div className="absolute bottom-[0px] h-1 w-5 rounded-full bg-[#2fe2fb]" />}
    </div>
  );
}

function Tray() {
  return (
    <div className="ml-auto flex items-center pr-[22px] text-white">
      <svg viewBox="0 0 18 10" className="h-[10px] w-[18px]" fill="none" stroke="#fff" strokeWidth="1.3"><path d="M1 9.3 L9 1 L17 9.3" /></svg>
      <svg viewBox="0 0 20 14" className="ml-[11px] h-[14px] w-5">
        <path d="M3.5 6.5 A6 6 0 0 1 15 4.5 L17 7 L8 11 Z" fill="#a9a9a9" />
        <path d="M4.5 13.5 A4.3 4.3 0 1 1 7 5.8 L14 9 L10 13.5 Z" fill="#d5d5d5" />
        <path d="M3 13 L12.5 6.6 Q16.8 4.8 18.4 7.8 A3.3 3.3 0 0 1 16.7 13.6 H5 Q3.8 13.6 3 13 Z" fill="#fff" />
      </svg>
      <svg viewBox="0 0 20 14" className="ml-[15px] h-[14px] w-5">
        <rect x=".7" y=".7" width="18.6" height="12" rx="2" fill="none" stroke="#fff" strokeWidth="1.2" />
        <path d="M3.5 4.2 H17 M5 7 H16" stroke="#fff" strokeWidth="1.5" strokeDasharray="1.5 1.6" />
        <path d="M5 10.2 H15" stroke="#fff" strokeWidth="1.2" />
      </svg>
      <div className="ml-[22px] w-[32px] text-center text-[15px] leading-5 tracking-[-0.2px]">
        <div>ENG</div>
        <div>IN</div>
      </div>
      <svg viewBox="0 0 20 16" className="ml-[21px] h-4 w-5" fill="none" stroke="#fff" strokeWidth="1.5">
        <path d="M.7 6 A13 13 0 0 1 19.3 6 M3.4 8.8 A9.2 9.2 0 0 1 16.6 8.8 M6.2 11.4 A5.3 5.3 0 0 1 13.8 11.4" />
        <circle cx="10" cy="13.6" r="1.3" fill="#fff" />
      </svg>
      <svg viewBox="0 0 20 16" className="ml-[10px] h-4 w-5" fill="none" stroke="#fff" strokeWidth="1.4">
        <path d="M1 5.5 H4 L8.5 1.8 V14.2 L4 10.5 H1 Z" />
        <path d="M12.5 5 L19 11.5 M19 5 L12.5 11.5" />
      </svg>
      <svg viewBox="0 0 20 17" className="ml-[10px] h-[17px] w-5">
        <path d="M8 3.2 H15.5 Q17.3 3.2 17.3 5 V13 Q17.3 14.8 15.5 14.8 H7" fill="none" stroke="#fff" strokeWidth="1.5" />
        <path d="M18 7 H20 V11 H18 Z M9.5 5.4 H12 V13 H6.5 V9 Q9.5 8 9.5 5.4 Z M0 2.5 H7.6 V6 Q7.6 8 5.2 8.3 V16 H2.5 V8.3 Q0 8 0 6 Z M1.2 0 H2.8 V3 H1.2 Z M4.8 0 H6.4 V3 H4.8 Z" fill="#fff" />
      </svg>
      <div className="-mt-px ml-[14px] w-[81px] whitespace-nowrap text-right text-[15px] leading-5 tracking-[-0.32px]">
        <div>15:03</div>
        <div>21-02-2023</div>
      </div>
      <div className="ml-[12px] flex h-5 w-[25px] items-center justify-center rounded-full bg-[#2fe2fb] text-[14px] tracking-[-0.3px] text-[#0c1a20]">28</div>
    </div>
  );
}

function Taskbar() {
  return (
    <div className="relative flex h-[60px] items-center bg-[linear-gradient(to_right,#2b2413_0,#2b2413_170px,#2d221b_230px,#252829_310px,#24292e_420px,#2b272b_520px,#252a2d_590px,#202538_660px,#232a38_760px,#272a35_900px,#262c36_1000px,#26272a_1060px,#14302d_1110px,#173232_1200px,#13302e_1310px,#232526_1345px,#3e1b2a_1375px,#3b1c2a_1425px,#2c262c_1480px,#262b31_1550px,#262d30_1640px,#2e2719_1690px,#31251b_1720px,#2d271d_1800px,#28261f_1920px)]">
      <svg viewBox="0 0 26 26" className="ml-7 h-[26px] w-[26px]">
        <defs><linearGradient id="sun" x1=".1" y1="0" x2=".8" y2="1"><stop offset="0" stopColor="#f5c32c" /><stop offset="1" stopColor="#f0640e" /></linearGradient></defs>
        <circle cx="13" cy="13" r="12.7" fill="url(#sun)" />
      </svg>
      <div className="ml-[11px] w-[100px] text-[15px] leading-5 tracking-[-0.35px]">
        <div className="tracking-[-0.9px] text-white">91°F</div>
        <div className="text-[#c4c2bf]">Sunny</div>
      </div>
      <div className="ml-[467px] flex items-center">
        <WindowsLogo />
        <div className="ml-[16px] mr-[5px] flex h-10 w-[124px] items-center rounded-full bg-white/[0.08] pl-[29px] text-[15px] tracking-[-0.4px] text-white">
          <svg viewBox="0 0 18 18" className="h-[18px] w-[18px]" fill="none" stroke="#fff" strokeWidth="1.7"><circle cx="10.8" cy="7" r="6" /><path d="M6.6 11.3 L.8 17.2" /></svg>
          <span className="ml-[6px]">Search</span>
        </div>
        <TaskApp><TaskViewIcon /></TaskApp>
        <TaskApp><ChatIcon /></TaskApp>
        <TaskApp><EdgeIcon /></TaskApp>
        <TaskApp running><ExplorerIcon /></TaskApp>
        <TaskApp running badge={<div className="absolute left-[25px] top-[4px] flex h-5 w-5 items-center justify-center rounded-full bg-[#2fe2fb] text-[14px] text-black">2</div>}>
          <WhatsAppIcon />
        </TaskApp>
        <TaskApp running badge={<div className="absolute left-[25px] top-[4px] flex h-5 w-5 items-center justify-center rounded-full bg-[#455a64] text-[12px] font-bold leading-none text-[#d5dde1]">c</div>}>
          <ChromeIcon />
        </TaskApp>
        <TaskApp active><DockerTaskIcon /></TaskApp>
        <TaskApp running><AppWindowIcon /></TaskApp>
        <TaskApp running><GitIcon /></TaskApp>
      </div>
      <Tray />
    </div>
  );
}

export default function App() {
  return (
    <div className={"relative h-[1080px] w-[1920px] overflow-hidden " + SEGOE}>
      <TabStrip />
      <Toolbar />
      <AmazonPage />
      <DockerWindow />
      <Taskbar />
    </div>
  );
}
